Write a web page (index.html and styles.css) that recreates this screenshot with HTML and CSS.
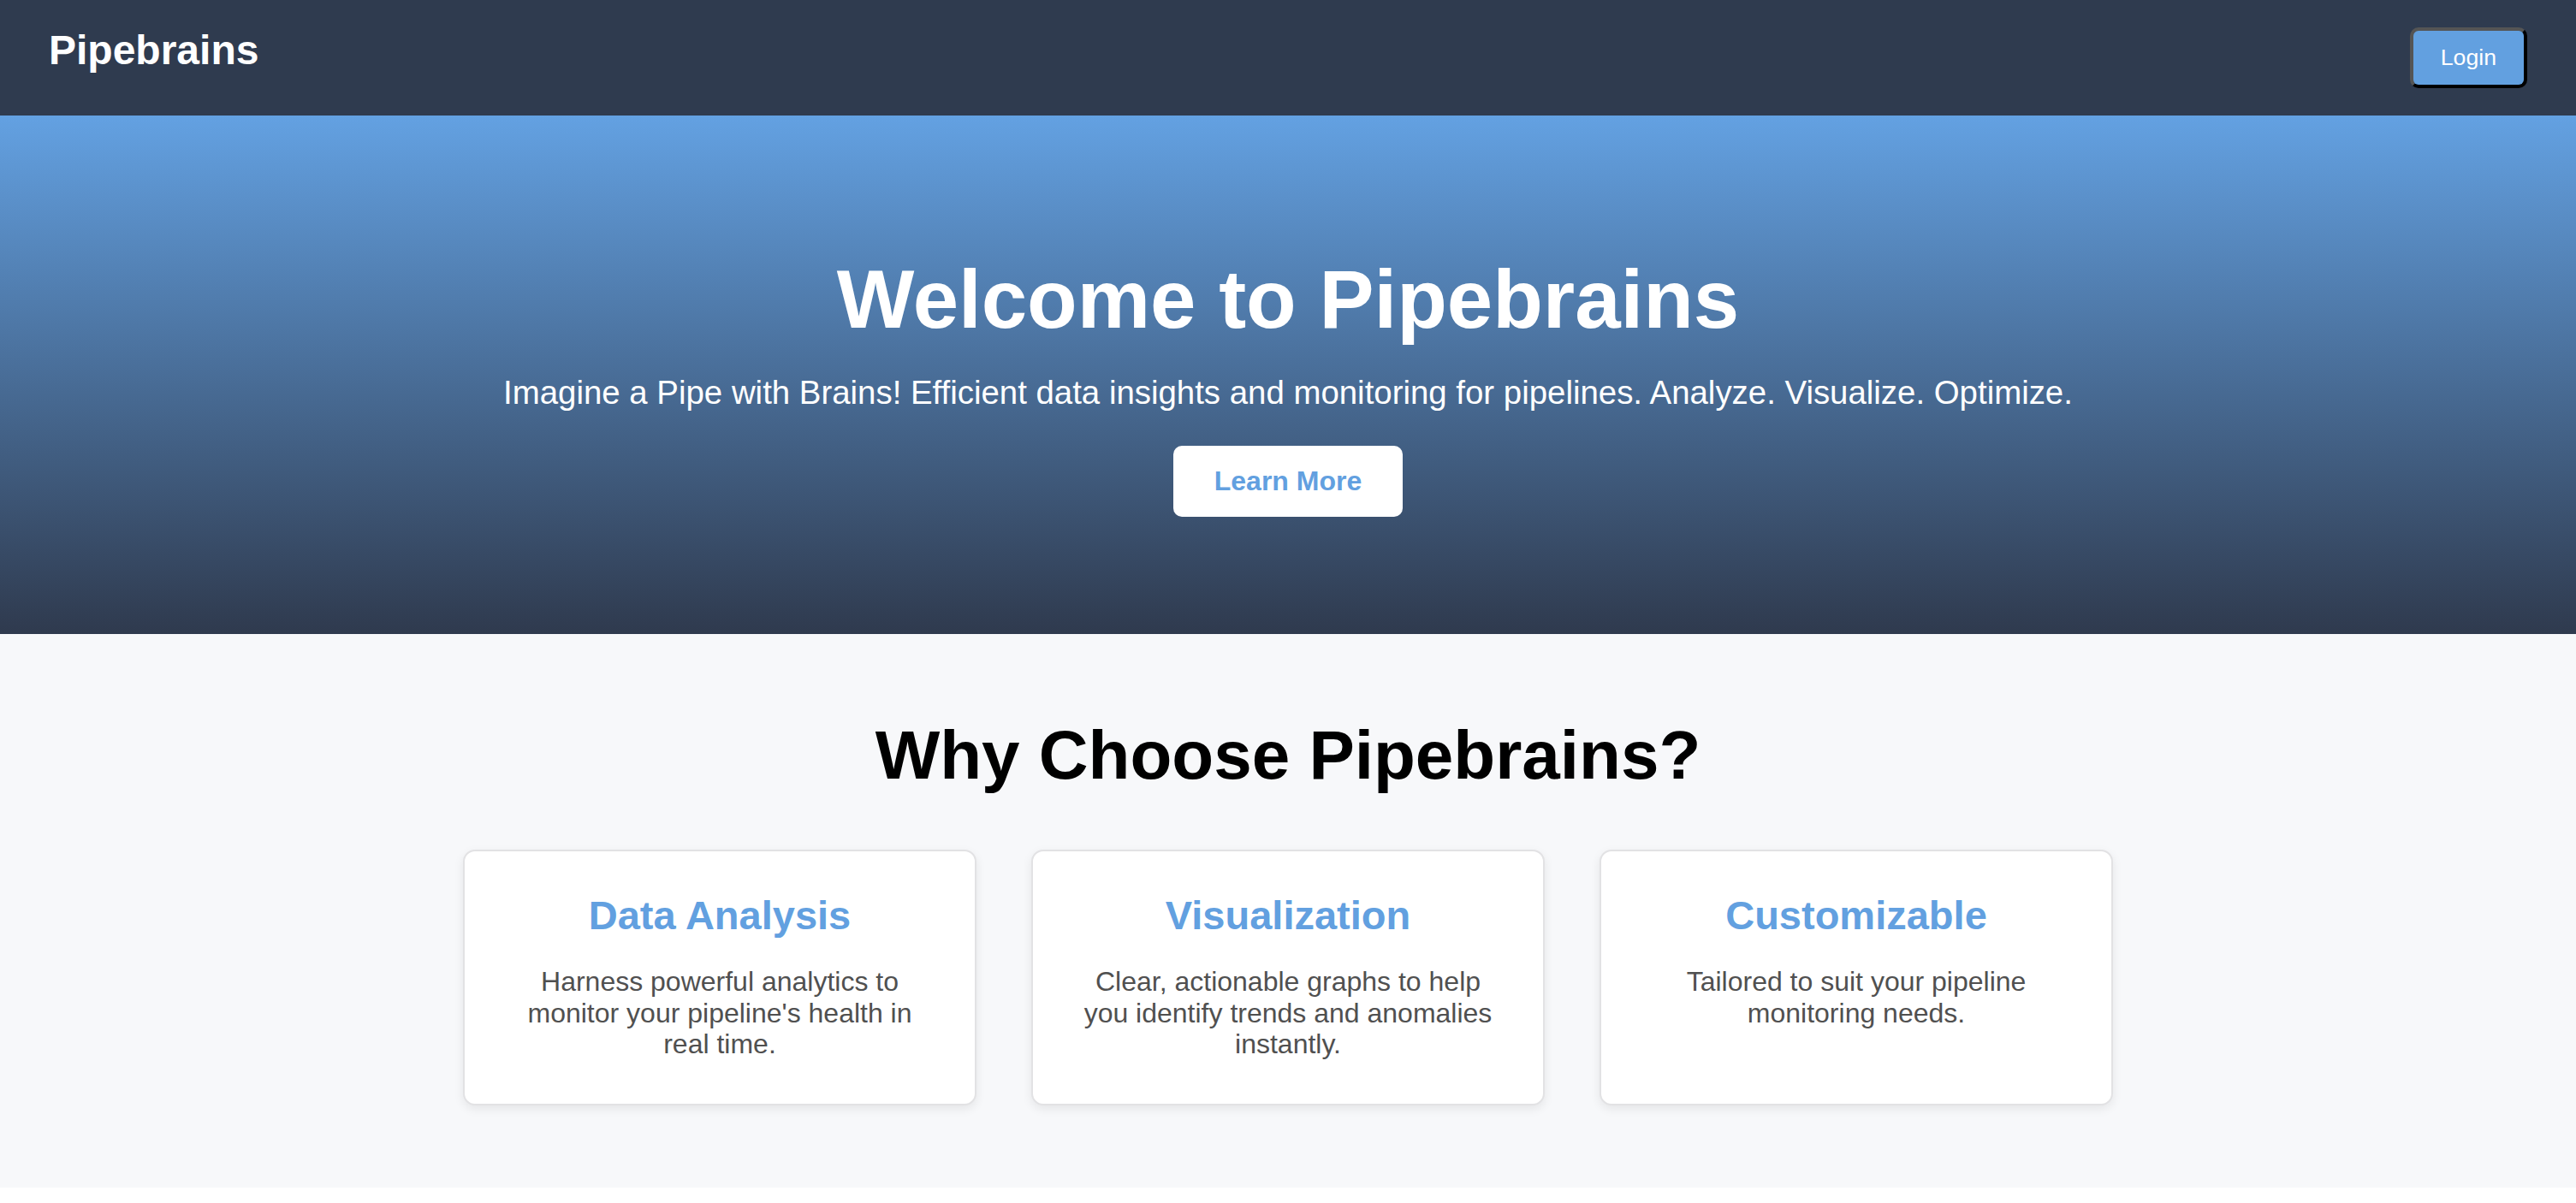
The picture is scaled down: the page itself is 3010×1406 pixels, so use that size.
FILE: index.html
```html
<!DOCTYPE html>
<html lang="en">
<head>
<meta charset="utf-8">
<title>Pipebrains</title>
<link rel="stylesheet" href="styles.css">
</head>
<body>
<header class="topbar">
  <div class="logo">Pipebrains</div>
  <button class="login-btn">Login</button>
</header>
<section class="hero">
  <h1 class="hero-title">Welcome to Pipebrains</h1>
  <p class="hero-sub">Imagine a Pipe with Brains! Efficient data insights and monitoring for pipelines. Analyze. Visualize. Optimize.</p>
  <button class="cta-btn">Learn More</button>
</section>
<section class="features">
  <h2 class="features-title">Why Choose Pipebrains?</h2>
  <div class="cards">
    <div class="card">
      <h3 class="card-title">Data Analysis</h3>
      <p class="card-text">Harness powerful analytics to monitor your pipeline's health in real time.</p>
    </div>
    <div class="card">
      <h3 class="card-title">Visualization</h3>
      <p class="card-text">Clear, actionable graphs to help you identify trends and anomalies instantly.</p>
    </div>
    <div class="card">
      <h3 class="card-title">Customizable</h3>
      <p class="card-text">Tailored to suit your pipeline monitoring needs.</p>
    </div>
  </div>
</section>
</body>
</html>
```

FILE: styles.css
```css
* { box-sizing: border-box; }
html, body {
  margin: 0;
  padding: 0;
  background: #ffffff;
  font-family: "Liberation Sans", Arial, Helvetica, sans-serif;
}
.topbar {
  display: flex;
  justify-content: space-between;
  align-items: flex-start;
  padding: 32px 57px 32px 57px;
  background: #2f3b4f;
  height: 135px;
}
.logo {
  color: #ffffff;
  font-size: 48px;
  font-weight: bold;
  line-height: 55px;
  margin-top: -1px;
}
.login-btn {
  font-family: "Liberation Sans", Arial, sans-serif;
  font-size: 26.67px;
  line-height: 31px;
  color: #ffffff;
  background: #62a0e0;
  border: 4px solid #000000;
  border-color: #555555 #000000 #000000 #555555;
  border-radius: 10px;
  padding: 16px 32px;
  height: 71px;
  white-space: nowrap;
}
.hero {
  background: linear-gradient(to bottom, #63a1e2 0%, #2f3a4e 100%);
  text-align: center;
  color: #ffffff;
  padding: 160px 40px 137px;
}
.hero-title {
  margin: 0 0 32px;
  font-size: 96px;
  font-weight: bold;
  line-height: 110px;
}
.hero-sub {
  margin: 0 0 40px;
  font-size: 38.4px;
  line-height: 44px;
}
.cta-btn {
  font-family: "Liberation Sans", Arial, sans-serif;
  background: #ffffff;
  color: #62a0e0;
  font-size: 32px;
  font-weight: bold;
  line-height: 35px;
  border: none;
  border-radius: 10px;
  padding: 24px 48px;
  white-space: nowrap;
}
.features {
  background: #f7f8fa;
  padding: 96px 40px 96px;
  text-align: center;
}
.features-title {
  margin: 0 0 64px;
  font-size: 80px;
  font-weight: bold;
  line-height: 92px;
  color: #000000;
}
.cards {
  display: flex;
  justify-content: center;
  gap: 64px;
}
.card {
  width: 600px;
  background: #ffffff;
  border: 2px solid #e2e2e4;
  border-radius: 14px;
  box-shadow: 0 4px 12px rgba(0, 0, 0, 0.08);
  padding: 48px 48px 51px;
}
.card-title {
  margin: 0 0 32px;
  font-size: 47px;
  font-weight: bold;
  line-height: 54px;
  color: #62a0e0;
}
.card-text {
  margin: 0;
  font-size: 32px;
  line-height: 36.5px;
  color: #505050;
}
```
